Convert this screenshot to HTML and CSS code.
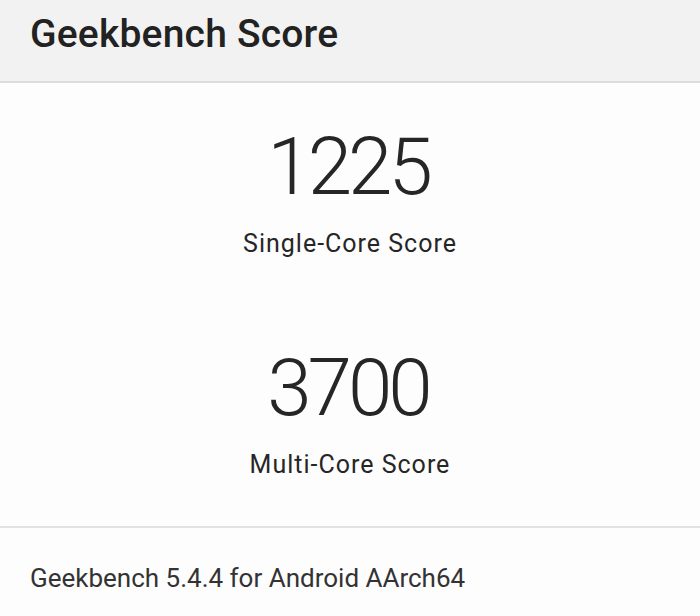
FILE: index.html
```html
<!DOCTYPE html>
<html lang="en">
<head>
    <meta charset="UTF-8">
    <meta name="viewport" content="width=device-width, initial-scale=1.0">
    <title>Geekbench Score</title>
    <link rel="stylesheet" href="styles.css">
</head>
<body>
    <div class="cabecalho">
        <h1>Geekbench Score</h1>
    </div>

    <div class="pontuacoes">
        <div class="pontuacao">
            <div class="valor">1225</div>
            <div class="rotulo">Single-Core Score</div>
        </div>
        <div class="pontuacao">
            <div class="valor">3700</div>
            <div class="rotulo">Multi-Core Score</div>
        </div>
    </div>

    <div class="rodape">Geekbench 5.4.4 for Android AArch64</div>
</body>
</html>
```

FILE: styles.css
```css
body { margin: 0; background: #fdfdfd; font-family: Roboto, "Noto Sans", sans-serif; color: #262626; overflow: hidden; }
.cabecalho { height: 83px; background: #f2f2f2; border-bottom: 2px solid #dcdcdc; padding: 11px 30px 0; box-sizing: border-box; }
h1 { margin: 0; font-size: 39px; line-height: 46px; font-weight: 500; color: #222; letter-spacing: 0.2px; }
.pontuacoes { display: flex; flex-direction: column; align-items: center; gap: 89px; padding: 44px 0 46px; border-bottom: 2px solid #e2e2e2; }
.pontuacao { display: flex; flex-direction: column; align-items: center; }
.valor { font-size: 80px; line-height: 80px; font-weight: 300; letter-spacing: -4px; margin-left: -4px; }
.rotulo { font-size: 25px; line-height: 30px; margin-top: 22px; letter-spacing: 1px; }
.rodape { padding: 35px 30px 0; font-size: 26px; line-height: 30px; color: #333; }
```
